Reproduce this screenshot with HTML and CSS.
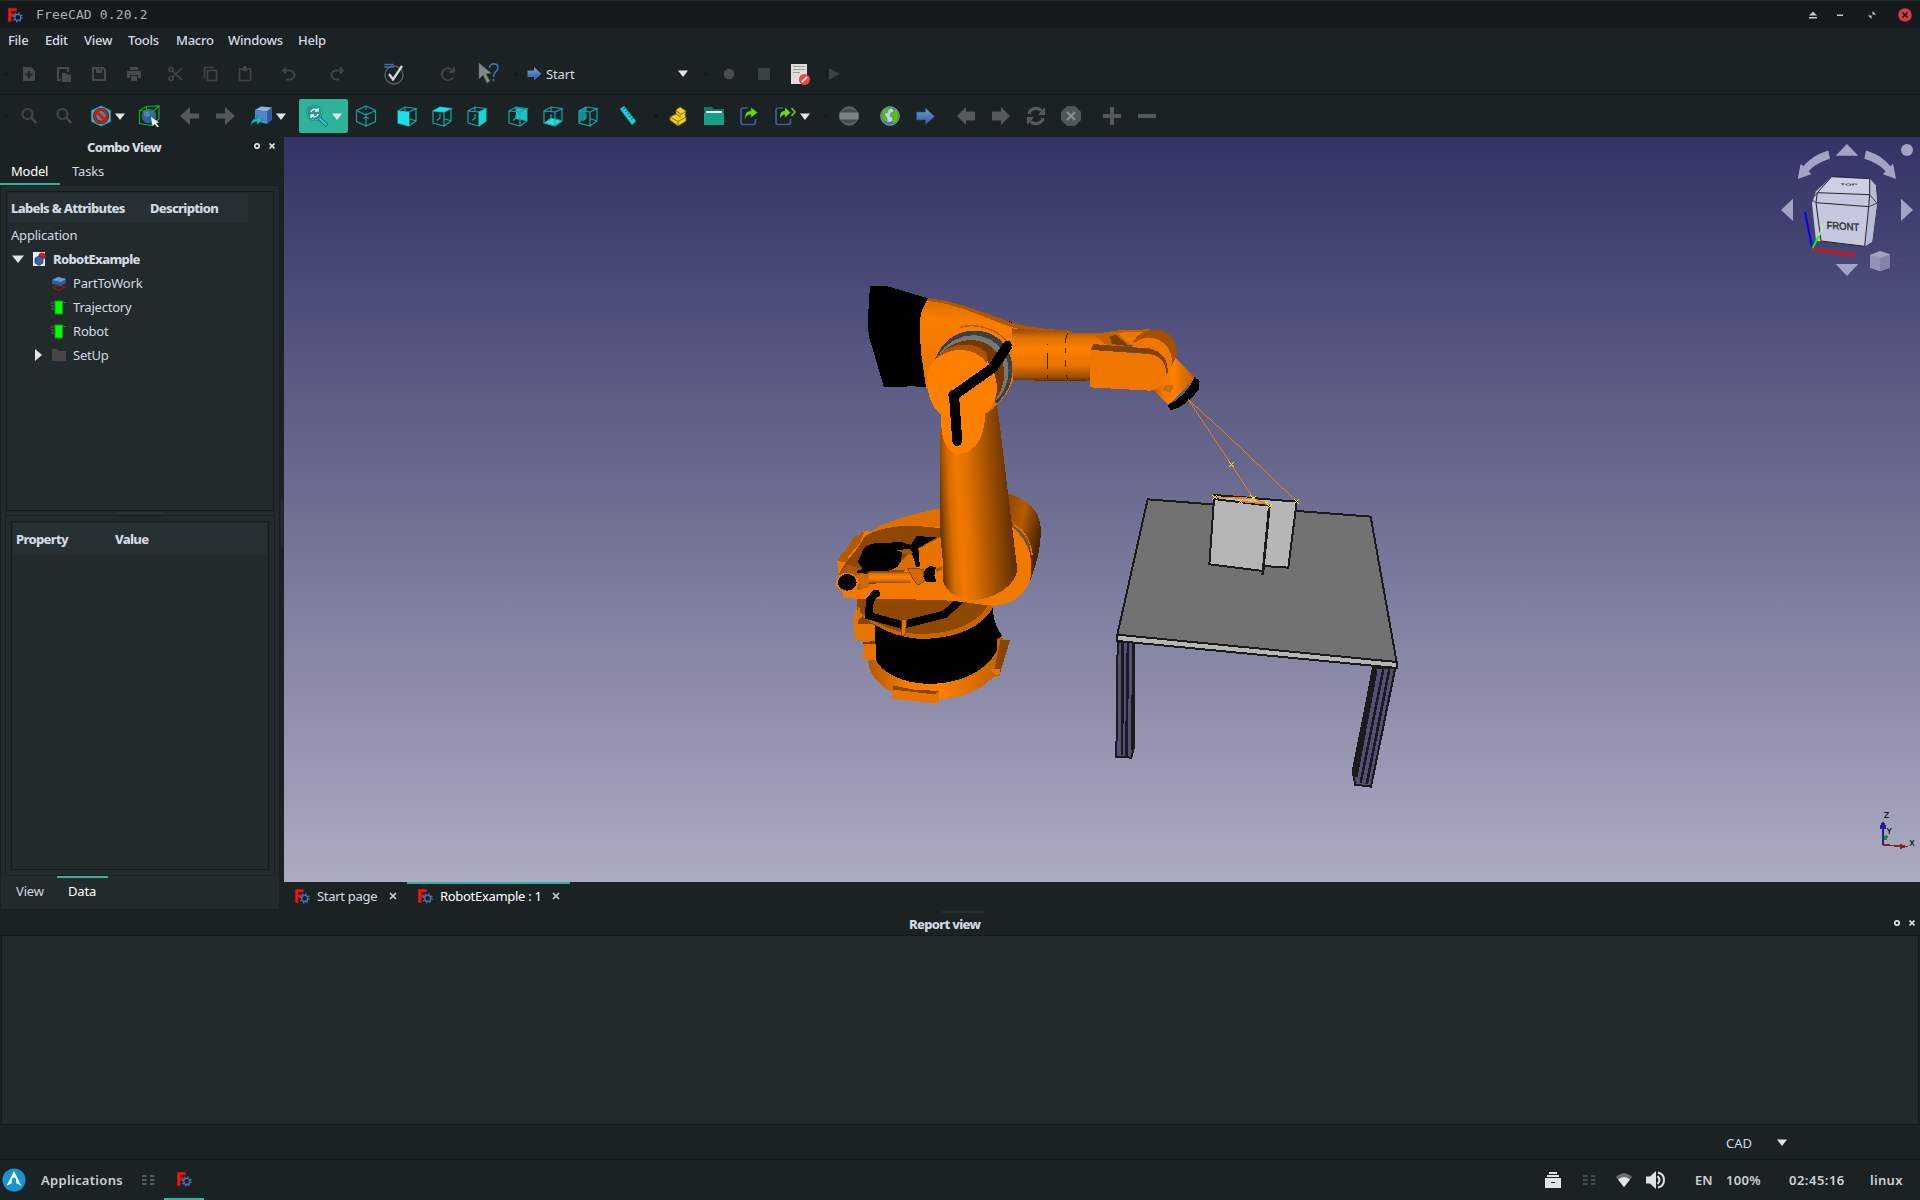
FILE: index.html
```html
<!DOCTYPE html>
<html lang="en">
<head>
<meta charset="utf-8">
<title>FreeCAD 0.20.2</title>
<link rel="stylesheet" href="styles.css">
</head>
<body>
<svg class="defs" width="0" height="0">
  <defs>
    <linearGradient id="blue" x1="0" y1="0" x2="0" y2="1"><stop offset="0" stop-color="#6fa0dc"/><stop offset="1" stop-color="#2c5a9c"/></linearGradient>
    <linearGradient id="column" gradientUnits="userSpaceOnUse" x1="360" y1="700" x2="580" y2="688"><stop offset="0" stop-color="#6a3700"/><stop offset=".05" stop-color="#9a4d00"/><stop offset=".14" stop-color="#d86c00"/><stop offset=".26" stop-color="#f27900"/><stop offset=".4" stop-color="#e07000"/><stop offset=".65" stop-color="#a85400"/><stop offset=".85" stop-color="#7c3e00"/><stop offset="1" stop-color="#5a2d00"/></linearGradient>
    <linearGradient id="arm" x1="0" y1="0" x2="0" y2="1"><stop offset="0" stop-color="#8a4500"/><stop offset=".18" stop-color="#e27100"/><stop offset=".4" stop-color="#ff8000"/><stop offset=".7" stop-color="#e67300"/><stop offset=".92" stop-color="#9c4e00"/><stop offset="1" stop-color="#5a2d00"/></linearGradient>
    <linearGradient id="upper" x1=".3" y1="0" x2=".2" y2="1"><stop offset="0" stop-color="#d86c00"/><stop offset=".2" stop-color="#fa7d00"/><stop offset=".45" stop-color="#f27900"/><stop offset="1" stop-color="#dc6e00"/></linearGradient>
    <linearGradient id="drum"><stop offset="0" stop-color="#b25900"/><stop offset=".25" stop-color="#f07800"/><stop offset=".5" stop-color="#ff8000"/><stop offset="1" stop-color="#b65b00"/></linearGradient>
    <linearGradient id="motor" x1="0" y1="0" x2="1" y2=".5"><stop offset="0" stop-color="#8a4500"/><stop offset=".5" stop-color="#b65b00"/><stop offset="1" stop-color="#4a2500"/></linearGradient>

    <symbol id="logo" viewBox="0 0 16 16">
      <path d="M1 1h9v3.200H4.600v2.200h3.600v3H4.600V15H1z" fill="#e01b1b" stroke="#6d0b0b" stroke-width=".6"/>
      <circle cx="10.700" cy="10.400" r="3" fill="none" stroke="#4876bd" stroke-width="1.300"/>
      <circle cx="10.700" cy="10.400" r="4.400" fill="none" stroke="#4876bd" stroke-width="1.500" stroke-dasharray="1.500 1.956"/>
    </symbol>
    <symbol id="cubewire" viewBox="0 0 22 22"><path d="M2 6 13 7v14L2 18zM2 6l7-4 11 1.500-7 3.500M20 3.500V16l-7 5M9 2v4m0 3v4l-3 2.500m7-2 7 2.500" fill="none" stroke="#16a5a8" stroke-width="1.200"/></symbol>
    <symbol id="mag" viewBox="0 0 22 22"><circle cx="9.500" cy="9" r="5" fill="none" stroke="#444645" stroke-width="2.200"/><path d="m13.300 12.800 5 5" stroke="#444645" stroke-width="2.600"/></symbol>
    <symbol id="fatarrow" viewBox="0 0 22 22"><path d="M2 8.500h9V2l10 9-10 9v-6.500H2z"/></symbol>
    <symbol id="chip" viewBox="0 0 16 16"><path d="M0 4h4M0 7h4M0 10h4M11 3.500h4" stroke="#5b6b45"/><rect x="4" y="2" width="7.500" height="13" fill="#0f0" stroke="#0a9a0a"/></symbol>
  </defs>
</svg>

<header class="titlebar">
  <svg class="i16"><use href="#logo"/></svg>
  <span class="title">FreeCAD 0.20.2</span>
  <div class="winbtns">
    <svg viewBox="0 0 10 10"><path d="M1 5.500 5 1.500l4 4zM1 7h8v1.500H1z" fill="#c4c9c9"/></svg>
    <svg viewBox="0 0 10 10"><path d="M2 4.500h6V6H2z" fill="#c4c9c9"/></svg>
    <svg viewBox="0 0 10 10"><path d="M5.500 1v3.500H9zM4.500 9V5.500H1z" fill="#c4c9c9"/></svg>
    <svg class="close" viewBox="0 0 14 14"><circle cx="7" cy="7" r="6.800" fill="#cc3f48"/><path d="m4.500 4.500 5 5m0-5-5 5" stroke="#15191b" stroke-width="1.600"/></svg>
  </div>
</header>

<nav class="menu"><span>File</span><span>Edit</span><span>View</span><span>Tools</span><span>Macro</span><span>Windows</span><span>Help</span></nav>

<div class="toolbar first">
  <i class="dot m4"></i>
  <svg class="ic m10" viewBox="0 0 22 22"><path d="M5 4h8l4 4v10H5z" fill="#474a4a"/><path d="M11 8v7m-3.500-3.500h7" stroke="#1c2325" stroke-width="2"/></svg>
  <svg class="ic m13" viewBox="0 0 22 22"><path d="M8 17H5V5h10v4" fill="none" stroke="#474a4a" stroke-width="2"/><path d="M9 10h4l1 1.500h4V19H9z" fill="#474a4a"/></svg>
  <svg class="ic m13" viewBox="0 0 22 22"><path d="M5 5h10l2 2v10H5z" fill="none" stroke="#474a4a" stroke-width="2"/><path d="M8 4h6v6H8z" fill="#474a4a"/><path d="M12 5v3" stroke="#1c2325"/></svg>
  <svg class="ic m13" viewBox="0 0 22 22"><path d="M7 4h8v3H7zM4 8h14v7h-3v-3H7v3H4zM8 13h6v5H8z" fill="#474a4a"/></svg>
  <svg class="ic m19" viewBox="0 0 22 22" fill="none" stroke="#414546" stroke-width="1.700"><circle cx="7" cy="6.500" r="2"/><circle cx="7" cy="15.500" r="2"/><path d="M8.500 8 18 17M8.500 14 18 5"/></svg>
  <svg class="ic m14" viewBox="0 0 22 22" fill="none" stroke="#414546" stroke-width="1.700"><path d="M4.500 15V4.500H14M7.500 7.500h9v10h-9z"/></svg>
  <svg class="ic m12" viewBox="0 0 22 22" fill="none" stroke="#414546" stroke-width="1.700"><path d="M5.500 6h11v11.500h-11zM8.500 7.500h5M11 3v4M9 4.500h4"/></svg>
  <svg class="ic m21" viewBox="0 0 22 22" fill="none" stroke="#414546" stroke-width="1.900"><path d="M9 4.500 6 7.500l3 3M6 7.500h7a4.500 4.500 0 0 1 0 9H9"/></svg>
  <svg class="ic m27" viewBox="0 0 22 22" fill="none" stroke="#414546" stroke-width="1.900"><path d="m14 4.500 3 3-3 3M17 7.500h-7a4.500 4.500 0 0 0 0 9h3"/></svg>
  <svg class="ic m35" viewBox="0 0 22 22"><circle cx="11" cy="12" r="9" fill="none" stroke="#5c6465" stroke-width="1.300"/><path d="M1.500 1.500h9M1.500 4h9" stroke="#3f6fb5" stroke-width="1.700"/><path d="m6 11 4 5.500L19 3" fill="none" stroke="#d8dada" stroke-width="2.300"/></svg>
  <svg class="ic m31" viewBox="0 0 22 22" fill="none" stroke="#414546" stroke-width="2"><path d="M17 14.500a6 6 0 1 1-.5-7M18 4v5h-5"/></svg>
  <svg class="ic m20" viewBox="0 0 22 22"><path d="m1 0 12 10-5 1 4 7-3 2-4-8-4 4z" fill="#858888" stroke="#5d6262" stroke-width=".6"/><path d="M11.500 5c0-5.500 8.500-5.500 8.500 0 0 3.500-4.500 4-4.500 8v1m0 2v2.500" fill="none" stroke="#4470ae" stroke-width="1.600"/></svg>
  <i class="dot m14"></i>
  <svg class="ic m5" viewBox="0 0 22 22" fill="url(#blue)"><path d="M4.500 7.500H11V4l7.500 7L11 17.500V14H4.500z"/></svg>
  <span class="combo">Start</span>
  <svg class="caret" viewBox="0 0 10 7"><path d="M0 .5h10L5 7z"/></svg>
  <i class="dot m16"></i>
  <svg class="ic m10" viewBox="0 0 22 22"><circle cx="11" cy="11" r="5.200" fill="#4c4b4b"/></svg>
  <svg class="ic m13" viewBox="0 0 22 22"><path d="M5 5h12v12H5z" fill="#3b4244"/></svg>
  <svg class="ic m14" viewBox="0 0 22 22"><path d="M2 1h16v20H2z" fill="#dedede"/><path d="M4 3.500h12M4 6.500h12M4 9.500h7" stroke="#9c9c9c"/><circle cx="15.500" cy="16.500" r="5.500" fill="#f2423a"/><path d="m13 19 5-5" stroke="#fff" stroke-width="2"/></svg>
  <svg class="ic m12" viewBox="0 0 22 22"><path d="M6 5v12l11-6z" fill="#3b4244"/></svg>
</div>

<div class="toolbar">
  <i class="dot m4"></i>
  <svg class="ic m10"><use href="#mag"/></svg>
  <svg class="ic m13"><use href="#mag"/></svg>
  <svg class="ic m15" viewBox="0 0 22 22"><path d="m11 1 9.500 4.500v11L11 21l-9.500-4.500v-11z" fill="#1cc8ce" stroke="#12969a"/><circle cx="11" cy="11" r="6.500" fill="#4a8a8e" stroke="#5a0808" stroke-width="3.200"/><path d="m6.500 6.500 9 9" stroke="#d81818" stroke-width="2.600"/><circle cx="11" cy="11" r="6.500" fill="none" stroke="#d81818" stroke-width="2.200"/></svg>
  <svg class="caret m3" viewBox="0 0 10 7"><path d="M0 .5h10L5 7z"/></svg>
  <svg class="ic m13" viewBox="0 0 22 22"><circle cx="11" cy="11" r="7.300" fill="#35609f"/><circle cx="9" cy="9" r="3" fill="#5580bd"/><path d="M1.500 5.500 14 7v13.500L1.500 18.500zM1.500 5.500l7-4 12.500-.5-7 6M21 1v13l-7 6.500M8.500 1.500v4" fill="none" stroke="#10b01c" stroke-width="1.200"/><path d="m13 12 8 5.500-3 .5 3 3.500-1.500 1-2.800-3.500-2 2z" fill="#fff"/></svg>
  <svg class="ic flip m19" viewBox="0 0 22 22"><use href="#fatarrow" fill="#535859"/></svg>
  <svg class="ic m13" viewBox="0 0 22 22"><use href="#fatarrow" fill="#535859"/></svg>
  <svg class="ic m15" viewBox="0 0 22 22"><path d="m4 5 6-3.500 11 1-5 4z" fill="#8eb4e6"/><path d="m4 5 12 1.500V19L4 16z" fill="#5285ca"/><path d="m16 6.500 5-4V15l-5 4z" fill="#2f5c9e"/><path d="M0 21c0-6 3-7.500 6-7.500V10l5.500 5L6 19.500V16.500c-3 0-5 1.500-6 4.500z" fill="#1cb9be" stroke="#0b5d60" stroke-width=".5"/></svg>
  <svg class="caret m3" viewBox="0 0 10 7"><path d="M0 .5h10L5 7z"/></svg>
  <div class="active m13">
    <svg class="ic m7" viewBox="0 0 22 22"><circle cx="8.500" cy="8" r="7" fill="#2f9490" stroke="#1c7478" stroke-width="2.200"/><circle cx="8.500" cy="8" r="7" fill="none" stroke="#35c9cb"/><path d="M4.800 7C6 3.500 10 3.500 12 5.500m0-2.500v3H9M12.200 9c-1.500 3.500-5 3.500-7 1.500m0 2.500v-3h3" fill="none" stroke="#dcefef" stroke-width="1.400"/><path d="m13.500 13.500 7.500 7" stroke="#0c6f72" stroke-width="4"/><path d="m13.500 13.500 7 6.500" stroke="#23d4da" stroke-width="2.200"/></svg>
    <svg class="caret m4" viewBox="0 0 10 7"><path d="M0 .5h10L5 7z"/></svg>
  </div>
  <svg class="ic m7" viewBox="0 0 22 22" fill="none" stroke="#139da1" stroke-width="1.200"><path d="m11 1 9.500 4.500v11L11 21l-9.500-4.500v-11zM1.500 5.500 11 10l9.500-4.500M11 10v11M11 1v4m0 3v4l-3 1.500m6 0-3-1.500"/></svg>
  <svg class="ic m19" viewBox="0 0 22 22"><use href="#cubewire"/><path d="m2 6 11 1v14L2 18z" fill="#1fdfe6"/></svg>
  <svg class="ic m13" viewBox="0 0 22 22"><use href="#cubewire"/><path d="m2 6 7-4 11 1.500-7 3.500z" fill="#1fdfe6"/></svg>
  <svg class="ic m13" viewBox="0 0 22 22"><use href="#cubewire"/><path d="m13 7 7-3.500V16l-7 5z" fill="#1cd0d6"/></svg>
  <svg class="ic m19" viewBox="0 0 22 22"><path d="m9 3 11 1v12L9 14z" fill="#1cc5cb"/><use href="#cubewire"/></svg>
  <svg class="ic m13" viewBox="0 0 22 22"><path d="m2 18 7-5 11 3-7 5z" fill="#1fdfe6"/><use href="#cubewire"/></svg>
  <svg class="ic m13" viewBox="0 0 22 22"><path d="m2 6 7-4v11l-7 5z" fill="#148c90"/><use href="#cubewire"/></svg>
  <svg class="ic m18" viewBox="0 0 22 22"><path d="m3 4 4-3 12 15-4 4z" fill="#1cd2d9" stroke="#0c7a7e" stroke-width=".7"/><path d="m8 3-2 1.500m4 1-2 1.500m4 1-2 1.500m4 1L12 12m4 1-2 1.500" stroke="#0d6669"/></svg>
  <i class="dot m15"></i>
  <svg class="ic m10" viewBox="0 0 22 22"><path d="m2 12 6-3V5l4-3 6 4-1 4 1 3v3l-8 5-8-6z" fill="#f1d221" stroke="#7d6a05" stroke-width=".8"/><path d="m2 12 8 4.500 8-4.500M10 16.500V21M8 5.500l5 4 4.500-3M8 9l5 3" fill="none" stroke="#7d6a05" stroke-width="1"/></svg>
  <svg class="ic m13" viewBox="0 0 22 22"><path d="M1 2h8l2 2h10v16H1z" fill="#16735f"/><path d="M3 6h16v2H3z" fill="#e9eeee"/><path d="M1 8h20v12H1z" fill="#17a085"/></svg>
  <svg class="ic m13" viewBox="0 0 22 22"><path d="M10 3H5.500Q3 3 3 5.500V17q0 2.500 2.500 2.500H15q2.500 0 2.500-2.500v-3" fill="none" stroke="#35609e" stroke-width="1.700"/><path d="M7 14c0-6 2-8 6-8V2.500l6.500 5-6.500 5V9.500c-3 0-5 1-6 4.500z" fill="#73d216" stroke="#3a7a05" stroke-width=".6"/></svg>
  <svg class="ic m14" viewBox="0 0 22 22"><path d="M9 3H4.500Q2 3 2 5.500V17q0 2.500 2.500 2.500H14q2.500 0 2.500-2.500v-3" fill="none" stroke="#35609e" stroke-width="1.700"/><path d="M6 14c0-6 1-8 5-8V2.500l5.500 5-5.500 5V9.500c-2 0-4 1-5 4.500z" fill="#73d216"/><path d="m17.500 3 3.500 4-3.500 4" fill="none" stroke="#73d216" stroke-width="1.500"/></svg>
  <svg class="caret m4" viewBox="0 0 10 7"><path d="M0 .5h10L5 7z"/></svg>
  <i class="dot m14"></i>
  <svg class="ic m10" viewBox="0 0 22 22"><circle cx="11" cy="11" r="9.300" fill="#454c4d" stroke="#666d6d" stroke-width=".8"/><path d="M5 4.500q6-3 12 0M5 17.500q6 3 12 0" fill="none" stroke="#666d6d"/><path d="M1.500 7.500h19v7h-19z" fill="#7d8282"/></svg>
  <svg class="ic m19" viewBox="0 0 22 22"><circle cx="11" cy="11" r="9.300" fill="#3f72b8" stroke="#a9b9c8" stroke-width=".8"/><circle cx="10" cy="10" r="7" fill="#b9d2ee"/><path d="M3 8c1-3 4-6 7-6l1 2-3 1 1 2-4 2 3 4 0 4-2 0c-3-3-4-6-3-9zM14 3c3 1 6 4 6 8l-2 5-3 3-2-1 1-5-3-2 1-3 3-1z" fill="#5fb81c" stroke="#3c8510" stroke-width=".5"/></svg>
  <svg class="ic m13" viewBox="0 0 22 22" fill="url(#blue)" stroke="#27497c" stroke-width=".6"><path d="M2.500 7h9V3l9 8.500-9 8V15h-9z"/></svg>
  <svg class="ic flip m19" viewBox="0 0 22 22"><path d="M2 6.500h9V2l9 9-9 9v-4.500H2z" fill="#545a5b"/></svg>
  <svg class="ic m13" viewBox="0 0 22 22"><path d="M2 6.500h9V2l9 9-9 9v-4.500H2z" fill="#545a5b"/></svg>
  <svg class="ic m13" viewBox="0 0 22 22"><path d="M4 9c1-6 9-7 12.500-3.500M18 13c-1 6-9 7-12.500 3.500" fill="none" stroke="#545a5b" stroke-width="3.200"/><path d="M20 2v8h-7zM2 20v-8h7z" fill="#545a5b"/></svg>
  <svg class="ic m13" viewBox="0 0 22 22"><path d="M7 1h8l6 6v8l-6 6H7l-6-6V7z" fill="#4f5657"/><path d="m7 7 8 8m0-8-8 8" stroke="#8a9091" stroke-width="2.200"/></svg>
  <svg class="ic m19" viewBox="0 0 22 22"><path d="M11 2v18M2 11h18" stroke="#545a5b" stroke-width="4"/></svg>
  <svg class="ic m13" viewBox="0 0 22 22"><path d="M2 11h18" stroke="#545a5b" stroke-width="4"/></svg>
</div>

<main class="work">
  <aside class="dock">
    <div class="docktitle"><b>Combo View</b>
      <svg class="dockbtns" viewBox="0 0 22 8"><circle cx="4" cy="4" r="2.200" fill="none" stroke="#dfe3e4" stroke-width="1.700"/><path d="m16.500 1.500 5 5m0-5-5 5" stroke="#dfe3e4" stroke-width="1.700"/></svg>
    </div>
    <div class="tabs"><span class="on">Model</span><span>Tasks</span></div>
    <div class="panel">
      <div class="tree">
        <div class="head treehead"><b>Labels &amp; Attributes</b><b>Description</b></div>
        <div class="row app">Application</div>
        <div class="row r1"><svg class="tri" viewBox="0 0 12 12"><path d="M0 2.500h12L6 10z"/></svg><svg class="i16" viewBox="0 0 16 16"><path d="M2 1h12v14H2z" fill="#f0f0f0"/><circle cx="11" cy="5" r="3.500" fill="#cc1f1f"/><path d="m4 7 4-2 4 2v5l-4 2.500L4 12z" fill="#3465a4" stroke="#17345e" stroke-width=".7"/></svg><b>RobotExample</b></div>
        <div class="row r2"><svg class="i16" viewBox="0 0 16 16"><path d="m2 12.500 5-2 7 1.500-6 3z" fill="none" stroke="#a31414" stroke-width="1.200"/><path d="m1 5 6-3 8 2v4l-5 3-9-2z" fill="#2f5c98"/><path d="m1 5 6-3 8 2-5 3z" fill="#6b98ca"/></svg><span>PartToWork</span></div>
        <div class="row r2"><svg class="i16"><use href="#chip"/></svg><span>Trajectory</span></div>
        <div class="row r2"><svg class="i16"><use href="#chip"/></svg><span>Robot</span></div>
        <div class="row r3"><svg class="tri" viewBox="0 0 12 12"><path d="M2 0v12l7-6z"/></svg><svg class="i16" viewBox="0 0 16 16"><path d="M1 2h5l2 2h7v10H1z" fill="#474545"/></svg><span>SetUp</span></div>
      </div>
      <div class="grip"></div>
      <div class="props"><div class="propbox"><div class="head prophead"><b>Property</b><b>Value</b></div></div></div>
      <div class="bottomtabs"><span>View</span><span class="on">Data</span></div>
    </div>
  </aside>

  <section class="center">
    <svg class="view" viewBox="284 137 1636 745" shape-rendering="crispEdges">
      <!-- robot base: origin of the group at 820,480, three units per pixel -->
      <g transform="translate(820 480) scale(.33333)">
        <path d="M568 42C630 58 668 110 662 170 660 210 650 250 632 300L560 280z" fill="url(#motor)"/>
        <path d="M582 135C610 150 630 180 636 225" fill="none" stroke="#e67300" stroke-width="5"/>
        <path d="M584 140C606 154 620 170 628 196" fill="none" stroke="#555b66" stroke-width="5"/>
        <path d="M145 545 165 520H510L534 450 550 478 570 481 538 587 522 590C480 635 420 655 357 658L352 671 214 655 216 636C175 615 145 580 145 545z" fill="url(#drum)"/>
        <path d="m220 617 60 12 78 4-3 38-141-16z" fill="#e87400"/><path d="m220 617 60 12 78 4-14 10-124-14z" fill="#8a4500"/>
        <path d="M542 478 570 481 538 587 512 570 524 565z" fill="#8a4500"/><path d="m510 568 30-2-2 21-14-4z" fill="#e87400"/>
        <path d="M165 430 517 380 522 415 530 440 546 468 532 478V510C500 570 430 610 330 612 240 610 185 575 167 540z" fill="#000"/>
        <path d="m108 380 25 40 32 14 3 108-40-5 5-52-27-6-6-50z" fill="#e87400"/><path d="m128 487 38-4v8l-36 2z" fill="#733a00"/><path d="m106 430 20-22 40 26z" fill="#8a4500"/>
        <path d="M112 352 520 365V380C490 440 410 477 300 477 215 470 165 440 112 395z" fill="#c86400"/>
        <path d="M112 352 510 365C480 430 400 462 300 462 220 460 165 430 112 390z" fill="#8f4800"/>
        <path d="M70 355 65 325 50 308 56 280 51 244 105 170 134 152 150 155C190 128 260 105 360 85L575 130C620 165 640 215 632 290 625 340 570 378 520 377 480 375 440 362 380 360z" fill="#f27900"/>
        <path d="M560 42C640 58 668 110 662 170 660 200 652 230 638 262 634 205 612 165 560 130z" fill="url(#motor)"/>
        <path d="M582 135C610 150 630 180 636 225" fill="none" stroke="#e67300" stroke-width="5"/>
        <path d="M582 142C604 156 620 174 628 198" fill="none" stroke="#555b66" stroke-width="5"/>
        <path d="M150 155C190 128 260 105 360 85V142C290 135 230 140 180 155z" fill="#df7000"/>
        <path d="M80 245 112 205 135 168C200 130 290 135 365 145V170L290 210 250 280 110 285 60 275z" fill="#8e4700"/>
        <path d="m51 244 54-74 30-18-14 34-37 45-2 15z" fill="#b35a00"/>
        <path d="M295 207 362 170V262L305 265z" fill="#e67300"/><path d="m210 270 60-50 25 35-15 15z" fill="#d96d00"/>
        <path d="m133 203 20-12 90-5 38 12 14 4 4 52-12-2-10-30-30-10-4 30-10 18-28 13-72 2-20-30z" fill="#000"/>
        <path d="m272 196 18-28 60 4-60 35z" fill="#000"/>
        <path d="M233 196 270 200 286 208 294 260" fill="none" stroke="#000" stroke-width="13"/>
        <path d="m229 210 40-3 12 12-18 6z" fill="#a85400"/>
        <path d="m55 284 28-30 50 16 16 50-35 10-14-25-20-20z" fill="#ad5700"/>
        <path d="M108 285 150 280V320L120 325z" fill="#cf6800"/>
        <path d="M146 275H270V308L148 311z" fill="url(#arm)"/>
        <path d="m263 264 47 4 3 35-18 12-16-17z" fill="#d36a00" stroke="#874300" stroke-width="3"/>
        <path d="M314 270 328 258 348 261 343 287 349 306 318 306 310 290z" fill="#000"/><path d="m348 268 17-10v12l-15 6z" fill="#a85400"/>
        <ellipse cx="82" cy="308" rx="34" ry="30" fill="#f27900"/><ellipse cx="82" cy="307" rx="28" ry="25" fill="#000"/>
        <path d="m116 270 30-6-6 18-32-5z" fill="#000"/>
        <path d="m168 338-18 22-4 47 100 28 128-32 55-50" fill="none" stroke="#000" stroke-width="23"/>
        <circle cx="168" cy="341" r="12" fill="#000"/>
        <path d="M380 362C440 364 480 376 520 377 570 378 620 345 632 290L560 250 400 320z" fill="#f27900"/>
        <path d="m245 420 15-1-4 45-12 3z" fill="#e67300" stroke="#6b3600" stroke-width="2"/>
        <path d="m116 380-16 45 14 8 6-48z" fill="#e67300"/>
      </g>
      <!-- lower arm, elbow and wrist: origin 820,270 -->
      <g transform="translate(820 270) scale(.33333)">
        <path d="M361 480 530 395 540 470 592 900C585 950 520 988 460 990 420 988 380 970 370 935L368 870 361 800z" fill="url(#column)"/>
        <path d="M150 48H200L325 85 330 353 270 348 250 352 192 352 156 230 146 200 144 140z" fill="#000"/>
        <path d="M325 85C390 88 470 120 560 152 610 172 680 178 755 182V332L580 330C560 380 540 400 500 430L318 352 302 240 300 150C303 125 310 105 325 85z" fill="url(#upper)"/>
        <path d="M325 85C390 88 470 120 560 152 610 172 680 178 755 182V190C680 190 610 186 555 165 470 130 390 98 320 92z" fill="#b05800"/>
        <path d="M575 175C640 182 700 186 752 182V190H880V328L746 334 580 330 575 290z" fill="url(#arm)"/>
        <path d="M684 222v4M683 248v50M684 316v10M744 190c-8 10-6 20-7 30m0 14v16m0 20v22m1 22 6 14" stroke="#3a1d00" stroke-width="3" fill="none"/>
        <path d="M563 153 577 156 577 160z" fill="#000"/>
        <path d="M420 172C460 160 520 170 560 212" fill="none" stroke="#b35a00" stroke-width="4"/>
        <path d="M345 268C370 205 420 178 475 182 545 188 590 250 574 330 565 365 545 388 528 402L500 350z" fill="#3d4042"/>
        <path d="M350 262C380 212 430 192 470 196 535 205 575 260 564 325 556 355 545 378 530 390L500 340z" fill="#777"/>
        <path d="M358 254C385 225 420 208 460 210 520 215 560 265 552 325 548 350 540 370 528 385L440 330z" fill="#713900"/>
        <path d="M345 268C362 248 390 238 420 238 490 240 535 290 530 365 528 395 515 415 495 432 495 480 480 550 410 553 375 545 362 500 363 435 335 415 320 370 320 325 322 300 330 285 345 268z" fill="#ff8000"/>
        <path d="M345 268 358 254C385 225 460 205 500 250L502 282C470 232 400 225 345 268z" fill="#a85400"/>
        <path d="m564 225-45 68-117 83 10 140" fill="none" stroke="#000" stroke-width="30"/><circle cx="562" cy="225" r="13" fill="#000"/><circle cx="412" cy="514" r="14" fill="#000"/><circle cx="400" cy="375" r="15" fill="#000"/>
        <path d="M820 192 905 180 990 178 960 220 870 235z" fill="#c46200"/><path d="M870 198 890 195 925 228 875 222z" fill="#7c3e00"/><path d="m890 188 78-2-25 42-18-8z" fill="#ec7600"/>
        <path d="M940 215C960 175 1030 160 1060 210 1075 235 1072 255 1066 268L1025 300z" fill="#a35100"/>
        <path d="M936 230C960 190 1020 195 1045 235 1060 260 1060 285 1045 310L1000 240z" fill="#ef7700"/>
        <path d="m1066 265 60 60-82 80-46-46 45-50z" fill="url(#drum)"/>
        <path d="M820 222 930 232 990 235C1030 245 1045 270 1044 310L1035 300C1030 270 1015 255 985 250L811 240z" fill="#824100"/>
        <path d="M811 240 985 252C1025 255 1040 285 1038 315 1035 345 1015 360 990 362L811 352z" fill="#ef7700"/>
        <path d="m1123 322 16 10-3 28C1110 390 1085 415 1052 421L1043 405C1080 390 1110 355 1123 322z" fill="#000"/>
        <path d="m1027 357 12-14 24 4-14 22z" fill="#d06800"/>
        <path d="M1104 388 1225 570M1104 388 1200 475 1300 570" fill="none" stroke="#f77c00" stroke-width="2.800"/>
      </g>
      <!-- table and workpiece: origin 1090,460 -->
      <g transform="translate(1090 460) scale(.33333)" stroke="#1b1b1b" stroke-width="6">
        <path d="M83 545H133L131 865 124 893 79 890z" fill="#505078"/><path d="M98 545 96 885M114 548 109 890M131 550 126 870" stroke-width="8"/>
        <path d="M850 625H916L843 980 795 974 789 930z" fill="#505078"/><path d="M854 628 794 950" stroke-width="18"/><path d="m880 628-68 340M898 628l-68 345" stroke-width="8"/><path d="m914 628-71 350" stroke-width="5"/>
        <path d="M173 118 842 170 920 606 82 524z" fill="#727272"/>
        <path d="M82 524 920 606V624L82 543z" fill="#b6b6b6"/>
        <path d="m375 105 245 20-25 198-75-5z" fill="#b6b6b6"/>
        <path d="m372 117 165 20-18 196-161-20z" fill="#b5b5b5"/><path d="M538 140 518 345" stroke-width="8"/>
        <path d="M375 112 490 115 538 135M450 124l80 8" stroke="#f77c00" stroke-width="4" fill="none"/>
        <path d="M415 0 490 115M490 0 618 123" stroke="#f77c00" stroke-width="2.800"/>
        <path d="m417 7 14 13m0-13-14 13M367 105l14 13m0-13-14 13M481 106l18 17m0-17-18 17M444 118l14 13m0-13-14 13M532 132l14 13m0-13-14 13M524 125l12 13M612 118l14 13m0-13-14 13" stroke="#f5f500" stroke-width="3"/>
      </g>
      <!-- navigation cube: origin 1760,130 -->
      <g transform="translate(1760 130) scale(.33333)" shape-rendering="auto">
        <g fill="#a3a3c6"><path d="m261 42 34 35h-68zM261 438l34-36h-68zM63 240l36-34v67zM459 240l-36-34v67z"/><circle cx="441" cy="60" r="18"/><path d="m205 62 5 24C180 95 160 108 146 124l8 9-41 14 9-46 8 8C150 85 175 70 205 62z"/><path d="m318 62-5 24c30 9 50 22 64 38l-8 9 39 14-9-46-8 8C373 85 348 70 318 62z"/></g>
        <path d="m215 140 114 6 18 20 4 54-15 115-22 14-131-15-15-2-12-112 12-36z" fill="#c5c8de"/>
        <path d="m329 146 18 20 4 54-15 115-22 14 12-119z" fill="#b8bbd4"/>
        <path d="m172 188 43-48 114 6v48z" fill="#cdd0e3"/>
        <path d="m172 188 43-48 114 6v48zM172 188l-4 30 158 12 3-36M168 218l15 115 131 16 12-119" fill="none" stroke="#222229" stroke-width="3"/>
        <path d="m172 188-16 20 12 12M329 194l22 26-25 10" fill="none" stroke="#42424c" stroke-width="3"/>
        <text class="front" transform="matrix(1 .065 .04 1 200 296)" textLength="98" lengthAdjust="spacingAndGlyphs">FRONT</text>
        <text class="top" transform="matrix(1 .02 0 .38 240 166)" textLength="52" lengthAdjust="spacingAndGlyphs">TOP</text>
        <path d="m135 246 22 110" stroke="#00f" stroke-width="6"/><path d="m157 356 20-39" stroke="#0f0" stroke-width="6"/><path d="m177 317 18-38" stroke="#a5eeb5" stroke-width="5"/><path d="m157 358 130 17" stroke="#f00" stroke-width="6"/>
        <path d="m330 375 30-12 30 10v40l-30 10-30-10z" fill="#a3a3c0"/><path d="m330 375 30 10v38l-30-10z" fill="#9292b4"/><path d="m360 385 30-12v40l-30 10z" fill="#8484a8"/><path d="M402 385h36l-18 17z" fill="#4a4a6e"/>
      </g>
      <!-- axis cross: origin 1780,790 -->
      <g transform="translate(1780 790) scale(.33333)">
        <path d="m310 150 4-15 11 2-5 12z" fill="#1f8a2a"/><path d="M309 165v-55" stroke="#22228a" stroke-width="6"/><path d="m300 116 2-15 7-8 7 8 2 15z" fill="#22228a"/><path d="m309 164 55 5" stroke="#8a2222" stroke-width="5"/><path d="m360 161 24 9-24 8z" fill="#8a2222"/>
        <g class="axis"><text x="311" y="83">Z</text><text x="320" y="131">Y</text><text x="388" y="167">X</text></g>
      </g>
    </svg>
    <div class="doctabs">
      <div class="dt"><svg class="i16"><use href="#logo"/></svg><span>Start page</span><svg class="x" viewBox="0 0 8 8"><path d="m1 1 6 6m0-6-6 6"/></svg></div>
      <div class="dt on"><svg class="i16"><use href="#logo"/></svg><span>RobotExample : 1</span><svg class="x" viewBox="0 0 8 8"><path d="m1 1 6 6m0-6-6 6"/></svg></div>
    </div>
  </section>
</main>

<section class="report">
  <div class="reporttitle"><b>Report view</b><svg class="dockbtns" viewBox="0 0 22 8"><circle cx="4" cy="4" r="2.200" fill="none" stroke="#dfe3e4" stroke-width="1.700"/><path d="m16.500 1.500 5 5m0-5-5 5" stroke="#dfe3e4" stroke-width="1.700"/></svg></div>
  <div class="reportbox"></div>
</section>
<div class="status"><span>CAD</span><svg class="caret" viewBox="0 0 10 7"><path d="M0 .5h10L5 7z"/></svg></div>

<footer class="taskbar">
  <svg class="arch" viewBox="0 0 24 24"><circle cx="12" cy="12" r="11.500" fill="#1793d1"/><path d="M12 3 4.500 18c2.500-1.500 4-2.500 5-2.500 0-4 1-6 2.500-6s2.500 2 2.500 6c1 0 2.500 1 5 2.500z" fill="#fff"/></svg>
  <span class="apps">Applications</span>
  <svg class="grid6" viewBox="0 0 13 10"><path d="M0 1h4.500M0 5h4.500M0 9h4.500M8 1h4.500M8 5h4.500M8 9h4.500" stroke="#555c5d" stroke-width="2"/></svg>
  <div class="task"><svg class="i16"><use href="#logo"/></svg></div>
  <div class="tray">
    <svg class="t-box" viewBox="0 0 16 16"><path d="M4 0h8v2H4zM2 3h12v2H2zM0 6h16v10H0z" fill="#dfe3e4"/><path d="M6 10.500h4" stroke="#1c2325"/></svg>
    <svg class="grid6" viewBox="0 0 13 10"><path d="M0 1h4.500M0 5h4.500M0 9h4.500M8 1h4.500M8 5h4.500M8 9h4.500" stroke="#454c4d" stroke-width="2"/></svg>
    <svg class="t-wifi" viewBox="0 0 16 14"><path d="M0 4Q8-3.500 16 4L8 14z" fill="#6a7071"/><path d="M2 6.500q6-5 12 0L8 14z" fill="#e4e7e7"/></svg>
    <svg class="t-vol" viewBox="0 0 20 18"><path d="M0 5.500h4L10 0v18l-6-5.500H0z" fill="#dfe3e4"/><path d="M11.500 5q4 4 0 8M12 1.500c8 2 8 13 0 15" fill="none" stroke="#dfe3e4" stroke-width="2"/></svg>
    <span class="t-en">EN</span><span class="t-pc">100%</span><span class="t-clock">02:45:16</span><span class="t-user">linux</span>
  </div>
</footer>
</body>
</html>
```
FILE: styles.css
```css
* { box-sizing: border-box; }
body { margin: 0; width: 1920px; height: 1200px; overflow: hidden; display: flex; flex-direction: column; background: #1b2224; color: #d3dae3; font: 13px/18px "Noto Sans", sans-serif; }
svg { display: block; flex: none; }
.defs { position: absolute; }
b { font-weight: 800; letter-spacing: -.7px; }
.i16 { width: 16px; height: 16px; }

.titlebar { height: 28px; flex: none; background: #14191b; border-top: 1px solid #272d30; display: flex; align-items: center; padding: 0 9px 0 7px; }
.title { margin-left: 13px; font: 13px/18px "DejaVu Sans Mono", monospace; letter-spacing: .15px; color: #a9b2bb; }
.winbtns { margin-left: auto; display: grid; grid-template-columns: 27px 28px 35px 31px; justify-items: center; align-items: center; margin-right: -9px; }
.winbtns svg { width: 10px; height: 10px; }
.winbtns .close { width: 14px; height: 14px; }

.menu { height: 25px; flex: none; display: grid; grid-template-columns: 37px 39px 44px 48px 52px 70px 50px; padding: 3px 0 0 8px; letter-spacing: -.25px; font-weight: 500; }

.toolbar { height: 42px; flex: none; display: flex; align-items: center; }
.toolbar.first { border-bottom: 1px solid #151a1c; }
.ic { width: 22px; height: 22px; }
.flip { transform: scaleX(-1); }
.dot { width: 4px; height: 4px; border-radius: 50%; background: #13181a; flex: none; }
.caret { width: 10px; height: 7px; fill: #e2e5e5; }
.combo { width: 131px; margin-left: 1px; padding-right: 1px; letter-spacing: -.15px; }
.combo + .caret { margin-left: 1px; }
.active { width: 49px; height: 34px; border-radius: 2px; background: #2eb398; display: flex; align-items: center; }
.m3 { margin-left: 3px; } .m4 { margin-left: 4px; } .m5 { margin-left: 5px; } .m7 { margin-left: 7px; }
.m10 { margin-left: 10px; } .m12 { margin-left: 12px; } .m13 { margin-left: 13px; } .m14 { margin-left: 14px; }
.m15 { margin-left: 15px; } .m16 { margin-left: 16px; } .m18 { margin-left: 18px; } .m19 { margin-left: 19px; }
.m20 { margin-left: 20px; } .m21 { margin-left: 21px; } .m27 { margin-left: 27px; } .m31 { margin-left: 31px; } .m35 { margin-left: 35px; }

.work { flex: none; height: 773px; display: grid; grid-template-columns: 284px 1fr; }
.dock { display: flex; flex-direction: column; height: 773px; background: linear-gradient(#242c2f, #242c2f) 281px 362px / 2px 48px no-repeat; }
.docktitle { height: 22px; padding: 1px 9px 0 87px; display: flex; justify-content: space-between; }
.dockbtns { width: 22px; height: 8px; margin-top: 5px; }
.docktitle .dockbtns { margin-top: 4px; }
.tabs { height: 26px; display: flex; letter-spacing: -.15px; }
.tabs span { width: 60px; padding: 3px 0 0 12px; }
.tabs .on { padding-left: 11px; letter-spacing: -.25px; color: #fff; border-bottom: 2px solid #2eb398; }
.panel { width: 280px; flex: 1; background: #222a2d; border: 1px solid #1a2022; padding: 5px 4px 0 5px; display: flex; flex-direction: column; }
.tree { width: 268px; height: 320px; border: 1px solid #151b1d; padding: 1px; flex: none; letter-spacing: -.2px; }
.head { background: #262f34; display: grid; align-items: center; }
.treehead { width: 240px; height: 30px; grid-template-columns: 139px 1fr; padding-left: 3px; }
.row { height: 24px; display: flex; align-items: center; }
.app { padding-left: 3px; }
.r1 { padding-left: 4px; }
.tri { width: 12px; height: 12px; fill: #e2e5e5; }
.r1 .i16 { margin: 0 6px 0 7px; }
.r2 { padding-left: 43px; gap: 6px; }
.r3 { padding-left: 25px; }
.r3 .i16 { margin: 0 6px; }
.grip { width: 48px; height: 2px; background: #293135; margin: 1px 0 1px 110px; flex: none; }
.props { width: 270px; height: 361px; margin-left: -1px; border: 1px solid #1a2022; padding: 5px; flex: none; }
.propbox { height: 349px; border: 1px solid #151b1d; padding: 1px; }
.prophead { height: 31px; padding: 1px 0 0 3px; grid-template-columns: 99px 1fr; }
.bottomtabs { display: flex; margin-left: -5px; letter-spacing: -.15px; }
.bottomtabs span { padding: 6px 0 0 15px; width: 56px; }
.bottomtabs .on { width: 51px; padding: 4px 0 0 11px; border-top: 2px solid #2eb398; color: #fff; }

.center { display: flex; flex-direction: column; }
.view { width: 1636px; height: 745px; background: linear-gradient(#333366, #ababc1); }
.front { font: 400 31px "Liberation Sans", sans-serif; fill: #2b2d36; stroke: #2b2d36; stroke-width: 1.2; }
.top { font: 700 24px "Liberation Sans", sans-serif; fill: #2b2d36; }
.axis { font: 24px "DejaVu Sans", sans-serif; fill: #000; stroke: #000; stroke-width: .5; }
.doctabs { display: flex; height: 28px; }
.dt { display: flex; align-items: center; padding: 0 0 2px 10px; width: 123px; border-top: 2px solid transparent; }
.dt.on { width: 163px; border-color: #2eb398; color: #fff; }
.dt span { margin-left: 7px; letter-spacing: -.3px; flex: 1; white-space: nowrap; }
.x { width: 8px; height: 8px; stroke: #cfd4d5; stroke-width: 1.6; margin-right: 10px; }

.report { flex: none; height: 215px; display: flex; flex-direction: column; background: linear-gradient(#242c2f, #242c2f) 941px 1px / 44px 2px no-repeat; }
.reporttitle { height: 25px; padding: 5px 5px 0 909px; display: flex; justify-content: space-between; }
.reporttitle .dockbtns { margin-top: 4px; }
.reportbox { flex: 1; margin: 0 1px; background: #222a2d; border: 1px solid #14191b; }
.status { height: 34px; flex: none; display: flex; align-items: center; padding: 1px 0 0 1726px; }
.status span { width: 51px; }
.taskbar { height: 41px; flex: none; border-top: 1px solid #14191b; background: #1b2224; display: flex; align-items: center; padding-left: 2px; font-weight: 600; color: #ccd2d3; }
.arch { width: 24px; height: 24px; }
.apps { margin-left: 15px; width: 101px; letter-spacing: .32px; }
.grid6 { width: 13px; height: 10px; }
.task { width: 40px; height: 40px; margin-left: 9px; border-bottom: 2px solid #2eb398; display: flex; align-items: center; justify-content: center; }
.tray { margin-left: auto; display: flex; align-items: center; width: 375px; }
.t-box { width: 16px; height: 16px; margin-right: 22px; }
.t-wifi { width: 16px; height: 14px; margin-left: 20px; }
.t-vol { width: 20px; height: 18px; margin-left: 14px; }
.t-en { margin-left: 29px; width: 31px; }
.t-pc { width: 63px; letter-spacing: .3px; }
.t-clock { width: 81px; letter-spacing: .5px; }
.t-user { letter-spacing: .3px; }
```
